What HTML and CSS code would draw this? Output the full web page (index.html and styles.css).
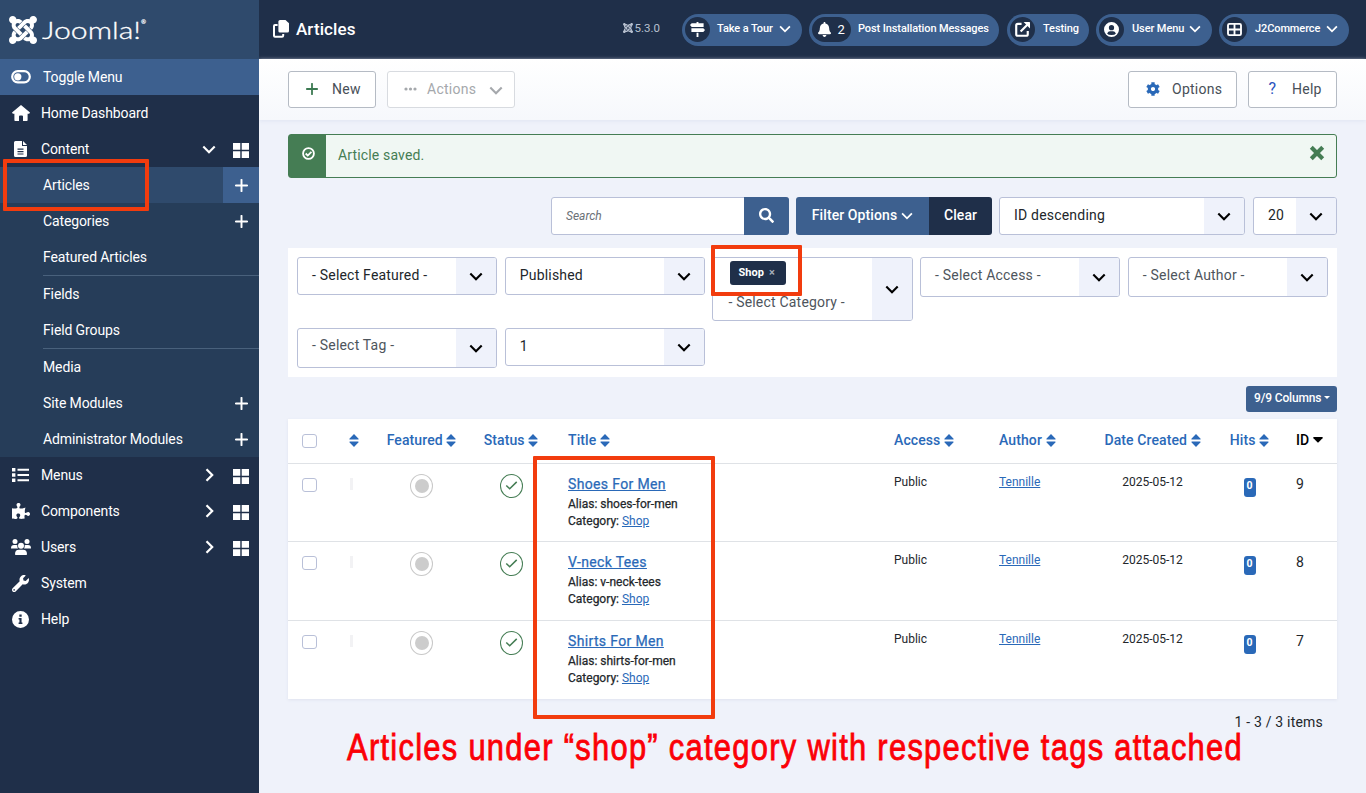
FILE: index.html
```html
<!DOCTYPE html>
<html lang="en">
<head>
    <meta charset="UTF-8">
    <meta name="viewport" content="width=device-width, initial-scale=1.0">
    <title>Articles - Joomla! Administration</title>
    <link rel="stylesheet" href="styles.css">
</head>
<body>
    <!-- Icon sprite -->
    <svg class="sprite">
        <symbol id="joomla" viewBox="0 32 448 448"><path d="M.6 92.1C.6 58.8 27.4 32 60.4 32c30 0 54.5 21.9 59.2 50.2 32.6-7.6 67.1.6 96.5 30l-44.3 44.3c-20.5-20.5-42.6-16.3-55.4-3.5-14.3 14.3-14.3 37.9 0 52.2l99.5 99.5-44 44.3c-87.7-87.2-49.7-49.7-99.8-99.7-26.8-26.5-35-64.8-24.8-98.9C20.4 144.6.6 120.7.6 92.1zm129.5 116.4l44.3 44.3c10-10 89.7-89.7 99.7-99.8 14.3-14.3 37.6-14.3 51.9 0 12.8 12.8 17 35-3.5 55.4l44 44.3c31.2-31.2 38.5-67.6 28.9-101.2 29.2-4.1 51.9-29.2 51.9-59.5 0-33.2-26.8-60.1-59.8-60.1-30.3 0-55.4 22.5-59.5 51.6-33.8-9.9-71.7-1.5-98.3 25.1-18.3 19.1-71.1 71.5-99.6 99.9zm266.3 152.2c8.2-32.7-.9-68.5-26.3-93.9-11.8-12.2 5 4.7-99.5-99.7l-44.3 44.3 99.7 99.7c14.3 14.3 14.3 37.6 0 51.9-12.8 12.8-35 17-55.4-3.5l-44 44.3c27.6 30.2 68 38.8 102.7 28 5.5 27.4 29.7 48.1 58.9 48.1 33 0 59.8-26.8 59.8-60.1 0-30.2-22.5-55-51.6-59.1zm-84.3-53.1l-44-44.3c-87 86.4-50.4 50.4-99.7 99.8-14.3 14.3-37.6 14.3-51.9 0-13.1-13.4-16.9-35.3 3.2-55.4l-44-44.3c-30.2 30.2-38 65.2-29.5 98.3-26.7 6-46.2 29.9-46.2 58.2C0 453.2 26.8 480 59.8 480c28.6 0 52.5-19.8 58.6-46.7 32.7 8.2 68.5-.6 94.2-26 32.1-32 12.2-12.4 99.5-99.7z"/></symbol>
        <symbol id="toggle" viewBox="0 0 20 14"><rect x="1.2" y="1.2" width="17.6" height="11.2" rx="5.6" fill="none" stroke="currentColor" stroke-width="2.2"/><circle cx="6.8" cy="6.8" r="3.6"/></symbol>
        <symbol id="home" viewBox="0 0 18 16"><path d="M9 0 18 7.6 17.2 8.8H15.6V15.2Q15.600 16 14.800 16H11V11.500Q11 10.500 10 10.500H8Q7 10.500 7 11.500V16H3.200Q2.400 16 2.400 15.200V8.800H.8L0 7.600Z"/></symbol>
        <symbol id="file" viewBox="0 0 13 16"><path fill-rule="evenodd" d="M1.500 0H8V5H13V14.500Q13 16 11.500 16H1.500Q0 16 0 14.500V1.500Q0 0 1.500 0ZM9 0 13 4H9ZM3.500 7.500V8.700H9.500V7.500ZM3.500 10V11.200H9.500V10ZM3.500 12.500V13.600H9.500V12.500Z"/></symbol>
        <symbol id="list" viewBox="0 0 17 14"><path d="M0 0H3.400V3.400H0ZM0 5.300H3.400V8.700H0ZM0 10.600H3.400V14H0ZM5.500.8H17V2.800H5.500ZM5.500 6H17V8H5.500ZM5.500 11.200H17V13.200H5.500Z"/></symbol>
        <symbol id="puzzle" viewBox="0 0 576 512"><path d="M519.442 288.651c-41.519 0-59.5 31.593-82.058 31.593C377.409 320.244 432 144 432 144s-196.288 80-196.288-3.297c0-35.827 36.288-46.25 36.288-85.985C272 19.216 243.885 0 210.539 0c-34.654 0-66.366 18.891-66.366 56.346 0 41.364 31.711 59.277 31.711 81.75C175.885 207.719 0 166.758 0 166.758v333.237s178.635 41.047 178.635-28.662c0-22.473-40-40.107-40-81.471 0-37.456 29.25-56.346 63.577-56.346 33.673 0 61.788 19.216 61.788 54.717 0 39.735-36.288 50.158-36.288 85.985 0 60.803 129.675 25.73 181.23 25.73 0 0-34.725-120.101 25.827-120.101 35.962 0 46.423 36.152 86.308 36.152C556.712 416 576 387.99 576 354.443c0-34.199-18.962-65.792-56.558-65.792z"/></symbol>
        <symbol id="users" viewBox="0 0 20 16"><circle cx="4" cy="2.600" r="2.500"/><circle cx="16" cy="2.600" r="2.500"/><circle cx="10" cy="6.800" r="3"/><path d="M0 9.200Q0 6 3 6H5.300Q6 6 6.400 6.300 6 8.300 7 9.600H.5Q0 9.600 0 9.200ZM20 9.200Q20 6 17 6H14.700Q14 6 13.600 6.300 14 8.300 13 9.600H19.500Q20 9.600 20 9.200ZM4 15.200Q4 10.800 8 10.800H12Q16 10.800 16 15.200 16 16 15.200 16H4.800Q4 16 4 15.200Z"/></symbol>
        <symbol id="wrench" viewBox="0 0 512 512"><path d="M507.73 109.1c-2.24-9.03-13.54-12.09-20.12-5.51l-74.36 74.36-67.88-11.31-11.31-67.88 74.36-74.36c6.62-6.62 3.43-17.9-5.66-20.16-47.38-11.74-99.55.91-136.58 37.93-39.64 39.64-50.55 97.1-34.05 147.2L18.74 402.76c-24.99 24.99-24.99 65.51 0 90.5 24.99 24.99 65.51 24.99 90.5 0l213.21-213.21c50.12 16.71 107.47 5.68 147.37-34.22 37.07-37.07 49.7-89.32 37.91-136.73zM64 472c-13.25 0-24-10.75-24-24 0-13.26 10.75-24 24-24s24 10.74 24 24c0 13.25-10.75 24-24 24z"/></symbol>
        <symbol id="info" viewBox="0 0 16 16"><path fill-rule="evenodd" d="M8 0A8 8 0 1 1 8 16 8 8 0 1 1 8 0ZM6.900 3.400V5.500H9.100V3.400ZM6.200 6.600V7.900H7V10.800H6.200V12.200H9.800V10.800H9V6.600Z"/></symbol>
        <symbol id="grid" viewBox="0 0 16 15"><path d="M0 0H7.300V6.800H0ZM8.700 0H16V6.800H8.700ZM0 8.200H7.300V15H0ZM8.700 8.200H16V15H8.700Z"/></symbol>
        <symbol id="plus" viewBox="0 0 12 12"><path d="M6 .8V11.200M.8 6H11.200" fill="none" stroke="currentColor" stroke-width="1.800" stroke-linecap="round"/></symbol>
        <symbol id="down" viewBox="0 0 14 9"><path d="M1.300 1.500 7 7.200 12.700 1.500" fill="none" stroke="currentColor" stroke-width="2.100"/></symbol>
        <symbol id="right" viewBox="0 0 9 14"><path d="M1.500 1.300 7.200 7 1.500 12.700" fill="none" stroke="currentColor" stroke-width="2.200"/></symbol>
        <symbol id="copy" viewBox="0 0 16 18"><path d="M7 0H12.500L16 3.200V11Q16 12.600 14.400 12.600H7Q5.400 12.600 5.400 11V1.600Q5.400 0 7 0Z"/><path d="M4.600 5H2Q1 5 1 6V15.800Q1 16.800 2 16.800H9Q10.200 16.800 10.200 15.500V14" fill="none" stroke="currentColor" stroke-width="2"/></symbol>
        <symbol id="signs" viewBox="0 0 16 16"><path d="M7 0H9V1.200H14.500V5.200H1.800L0 3.200 1.800 1.200H7ZM1.500 6.600H14.200L16 8.600 14.200 10.600H1.500ZM7 11.400H9V16H7Z"/></symbol>
        <symbol id="bell" viewBox="0 0 448 512"><path d="M224 512c35.32 0 63.97-28.65 63.97-64H160.03c0 35.35 28.65 64 63.97 64zm215.39-149.71c-19.32-20.76-55.47-51.99-55.47-154.29 0-77.7-54.48-139.9-127.94-155.16V32c0-17.67-14.32-32-31.98-32s-31.98 14.33-31.98 32v20.84C118.56 68.1 64.08 130.3 64.08 208c0 102.3-36.15 133.53-55.47 154.29-6 6.45-8.66 14.16-8.61 21.71.11 16.4 12.98 32 32.1 32h383.8c19.12 0 32-15.6 32.1-32 .05-7.55-2.61-15.27-8.61-21.71z"/></symbol>
        <symbol id="external" viewBox="0 0 16 16"><path d="M7 2H3Q1.300 2 1.300 3.700V13Q1.300 14.700 3 14.700H12Q13.600 14.700 13.600 13V9.500M6 10.200 14 2.200" fill="none" stroke="currentColor" stroke-width="2.300"/><path d="M9.200 0H15.400Q16 0 16 .6V6.800Z"/></symbol>
        <symbol id="user" viewBox="0 0 16 16"><path fill-rule="evenodd" d="M8 0A8 8 0 1 1 8 16 8 8 0 1 1 8 0ZM8 3.200A2.800 2.800 0 1 0 8 8.800 2.800 2.800 0 1 0 8 3.200ZM3.300 12.200Q4.300 13.900 8 13.900 11.700 13.900 12.700 12.200 11.600 9.900 9.600 9.900H6.400Q4.400 9.900 3.300 12.200Z"/></symbol>
        <symbol id="table" viewBox="0 0 16 14"><path d="M2.500 1H13.500Q15 1 15 2.500V11.500Q15 13 13.500 13H2.500Q1 13 1 11.500V2.500Q1 1 2.500 1ZM8 1V13M1 7H15" fill="none" stroke="currentColor" stroke-width="2"/></symbol>
        <symbol id="dots" viewBox="0 0 13 4"><circle cx="2" cy="2" r="1.600"/><circle cx="6.500" cy="2" r="1.600"/><circle cx="11" cy="2" r="1.600"/></symbol>
        <symbol id="cog" viewBox="-8 -8 16 16"><circle r="4.200" fill="none" stroke="currentColor" stroke-width="3.600"/><path d="M0-7.700V-5M0 7.700V5M6.700-3.800 4.400-2.500M-6.700 3.800-4.400 2.500M6.700 3.800 4.400 2.500M-6.700-3.800-4.400-2.500" stroke="currentColor" stroke-width="3.800"/></symbol>
        <symbol id="check-circle" viewBox="0 0 12 12"><circle cx="6" cy="6" r="5" fill="none" stroke="currentColor" stroke-width="1.700"/><path d="M3.400 6 5.300 7.900 8.700 4.400" fill="none" stroke="currentColor" stroke-width="1.700"/></symbol>
        <symbol id="check" viewBox="0 0 14 10"><path d="M1.200 5 5 8.600 12.800 1" fill="none" stroke="currentColor" stroke-width="1.700"/></symbol>
        <symbol id="times" viewBox="0 0 14 14"><path d="M2 2 12 12M12 2 2 12" fill="none" stroke="currentColor" stroke-width="3.600"/></symbol>
        <symbol id="search" viewBox="0 0 512 512"><path d="M505 442.7L405.3 343c-4.5-4.5-10.6-7-17-7H372c27.6-35.3 44-79.7 44-128C416 93.1 322.9 0 208 0S0 93.1 0 208s93.1 208 208 208c48.3 0 92.7-16.4 128-44v16.3c0 6.4 2.5 12.5 7 17l99.7 99.7c9.4 9.4 24.6 9.4 33.9 0l28.3-28.3c9.4-9.400 9.400-24.600.1-34zM208 336c-70.7 0-128-57.2-128-128 0-70.7 57.2-128 128-128 70.7 0 128 57.2 128 128 0 70.700-57.200 128-128 128z"/></symbol>
        <symbol id="sort" viewBox="0 0 10 13"><path d="M5 0 9.600 4.700Q9.800 5.600 9 5.600H1Q.2 5.600.4 4.700ZM5 13 9.600 8.300Q9.800 7.400 9 7.400H1Q.2 7.400.4 8.300Z"/></symbol>
        <symbol id="caret" viewBox="0 0 10 6"><path d="M.8 0H9.200Q10.200.4 9.500 1.200L5.600 5.200Q5 5.700 4.400 5.200L.5 1.200Q-.2.4.8 0Z"/></symbol>
    </svg>

    <div class="wrapper">
        <!-- Sidebar -->
        <aside class="sidebar">
            <div class="logo">
                <svg class="logo-mark"><use href="#joomla"/></svg>
                <svg class="logo-text" width="108" height="32"><text x="0" y="25" textLength="99" lengthAdjust="spacingAndGlyphs">Joomla!</text><text class="reg" x="99" y="10">®</text></svg>
            </div>
            <a class="item toggle" href="#"><svg class="ico" width="20" height="14"><use href="#toggle"/></svg><span>Toggle Menu</span></a>
            <a class="item" href="#"><svg class="ico" width="18" height="16"><use href="#home"/></svg><span>Home Dashboard</span></a>
            <a class="item" href="#"><svg class="ico" width="13" height="16"><use href="#file"/></svg><span>Content</span><svg class="arrow" width="14" height="9"><use href="#down"/></svg><svg class="dash"><use href="#grid"/></svg></a>
            <div class="submenu">
                <a class="sub active" href="#">Articles<i class="add"><svg><use href="#plus"/></svg></i></a>
                <a class="sub" href="#">Categories<i class="add"><svg><use href="#plus"/></svg></i></a>
                <a class="sub" href="#">Featured Articles</a>
                <hr>
                <a class="sub" href="#">Fields</a>
                <a class="sub" href="#">Field Groups</a>
                <hr>
                <a class="sub" href="#">Media</a>
                <a class="sub" href="#">Site Modules<i class="add"><svg><use href="#plus"/></svg></i></a>
                <a class="sub" href="#">Administrator Modules<i class="add"><svg><use href="#plus"/></svg></i></a>
            </div>
            <a class="item" href="#"><svg class="ico" width="17" height="14"><use href="#list"/></svg><span>Menus</span><svg class="arrow" width="9" height="14"><use href="#right"/></svg><svg class="dash"><use href="#grid"/></svg></a>
            <a class="item" href="#"><svg class="ico" width="18" height="16"><use href="#puzzle"/></svg><span>Components</span><svg class="arrow" width="9" height="14"><use href="#right"/></svg><svg class="dash"><use href="#grid"/></svg></a>
            <a class="item" href="#"><svg class="ico" width="20" height="16"><use href="#users"/></svg><span>Users</span><svg class="arrow" width="9" height="14"><use href="#right"/></svg><svg class="dash"><use href="#grid"/></svg></a>
            <a class="item" href="#"><svg class="ico" width="17" height="17"><use href="#wrench"/></svg><span>System</span></a>
            <a class="item" href="#"><svg class="ico" width="17" height="17"><use href="#info"/></svg><span>Help</span></a>
        </aside>

        <main class="main">
            <!-- Header -->
            <header class="header">
                <svg class="title-icon"><use href="#copy"/></svg>
                <h1>Articles</h1>
                <div class="version"><svg><use href="#joomla"/></svg>5.3.0</div>
                <div class="pill w-tour"><b><svg width="15" height="15"><use href="#signs"/></svg></b><span>Take a Tour</span><svg class="chev"><use href="#down"/></svg></div>
                <div class="pill w-post"><b class="wide"><svg width="13" height="15"><use href="#bell"/></svg>2</b><span>Post Installation Messages</span></div>
                <div class="pill w-site"><b><svg width="15" height="15"><use href="#external"/></svg></b><span>Testing</span></div>
                <div class="pill w-user"><b><svg width="15" height="15"><use href="#user"/></svg></b><span>User Menu</span><svg class="chev"><use href="#down"/></svg></div>
                <div class="pill w-j2"><b><svg width="15" height="13"><use href="#table"/></svg></b><span>J2Commerce</span><svg class="chev"><use href="#down"/></svg></div>
            </header>

            <!-- Toolbar -->
            <div class="toolbar">
                <button class="btn new"><svg class="green" width="12" height="12"><use href="#plus"/></svg>New</button>
                <button class="btn actions"><svg width="13" height="4"><use href="#dots"/></svg>Actions<svg class="last" width="14" height="9"><use href="#down"/></svg></button>
                <button class="btn options"><svg class="blue" width="14" height="14"><use href="#cog"/></svg>Options</button>
                <button class="btn help"><em>?</em>Help</button>
            </div>

            <section class="content">
                <div class="alert">
                    <div class="alert-icon"><svg width="13" height="13"><use href="#check-circle"/></svg></div>
                    <p>Article saved.</p>
                    <svg class="close" width="16" height="16"><use href="#times"/></svg>
                </div>

                <div class="searchbar">
                    <div class="search"><span>Search</span><b><svg width="15" height="15"><use href="#search"/></svg></b></div>
                    <div class="filter-btns"><button class="filter">Filter Options<svg width="12" height="8"><use href="#down"/></svg></button><button class="clear">Clear</button></div>
                    <div class="select order"><span>ID descending</span><i><svg><use href="#down"/></svg></i></div>
                    <div class="select limit"><span>20</span><i><svg><use href="#down"/></svg></i></div>
                </div>

                <div class="filters">
                    <div class="select"><span>- Select Featured -</span><i><svg><use href="#down"/></svg></i></div>
                    <div class="select"><span>Published</span><i><svg><use href="#down"/></svg></i></div>
                    <div class="select category">
                        <div class="choices"><b class="tag">Shop <small>×</small></b><span>- Select Category -</span></div>
                        <i><svg><use href="#down"/></svg></i>
                    </div>
                    <div class="select multi"><span>- Select Access -</span><i><svg><use href="#down"/></svg></i></div>
                    <div class="select multi"><span>- Select Author -</span><i><svg><use href="#down"/></svg></i></div>
                    <div class="select multi tags"><span>- Select Tag -</span><i><svg><use href="#down"/></svg></i></div>
                    <div class="select"><span>1</span><i><svg><use href="#down"/></svg></i></div>
                </div>

                <div class="columns"><button>9/9 Columns<span></span></button></div>

                <table class="articles">
                    <colgroup><col class="c-check"><col class="c-order"><col class="c-feat"><col class="c-status"><col class="c-title"><col class="c-access"><col class="c-author"><col class="c-date"><col class="c-hits"><col class="c-id"></colgroup>
                    <thead>
                        <tr>
                            <th><i class="box"></i></th>
                            <th class="center"><svg><use href="#sort"/></svg></th>
                            <th class="center">Featured <svg><use href="#sort"/></svg></th>
                            <th class="center">Status <svg><use href="#sort"/></svg></th>
                            <th>Title <svg><use href="#sort"/></svg></th>
                            <th>Access <svg><use href="#sort"/></svg></th>
                            <th>Author <svg><use href="#sort"/></svg></th>
                            <th class="center">Date Created <svg><use href="#sort"/></svg></th>
                            <th class="center">Hits <svg><use href="#sort"/></svg></th>
                            <th class="current">ID <svg class="caret"><use href="#caret"/></svg></th>
                        </tr>
                    </thead>
                    <tbody>
                        <tr>
                            <td><i class="box"></i></td>
                            <td class="center"><i class="grip"></i></td>
                            <td class="center"><i class="round feat"></i></td>
                            <td class="center"><i class="round pub"><svg><use href="#check"/></svg></i></td>
                            <td class="info"><a class="name" href="#">Shoes For Men</a><div>Alias: shoes-for-men</div><div>Category: <a href="#">Shop</a></div></td>
                            <td class="small">Public</td>
                            <td class="small"><a href="#">Tennille</a></td>
                            <td class="small center">2025-05-12</td>
                            <td class="center"><b class="badge">0</b></td>
                            <td class="id">9</td>
                        </tr>
                        <tr>
                            <td><i class="box"></i></td>
                            <td class="center"><i class="grip"></i></td>
                            <td class="center"><i class="round feat"></i></td>
                            <td class="center"><i class="round pub"><svg><use href="#check"/></svg></i></td>
                            <td class="info"><a class="name" href="#">V-neck Tees</a><div>Alias: v-neck-tees</div><div>Category: <a href="#">Shop</a></div></td>
                            <td class="small">Public</td>
                            <td class="small"><a href="#">Tennille</a></td>
                            <td class="small center">2025-05-12</td>
                            <td class="center"><b class="badge">0</b></td>
                            <td class="id">8</td>
                        </tr>
                        <tr>
                            <td><i class="box"></i></td>
                            <td class="center"><i class="grip"></i></td>
                            <td class="center"><i class="round feat"></i></td>
                            <td class="center"><i class="round pub"><svg><use href="#check"/></svg></i></td>
                            <td class="info"><a class="name" href="#">Shirts For Men</a><div>Alias: shirts-for-men</div><div>Category: <a href="#">Shop</a></div></td>
                            <td class="small">Public</td>
                            <td class="small"><a href="#">Tennille</a></td>
                            <td class="small center">2025-05-12</td>
                            <td class="center"><b class="badge">0</b></td>
                            <td class="id">7</td>
                        </tr>
                    </tbody>
                </table>
                <div class="counter">1 - 3 / 3 items</div>
            </section>
        </main>
    </div>

    <!-- Annotations -->
    <div class="mark mark-menu"></div>
    <div class="mark mark-filter"></div>
    <div class="mark mark-titles"></div>
    <svg class="caption" width="910" height="44"><text x="1" y="31" textLength="896" lengthAdjust="spacingAndGlyphs">Articles under “shop” category with respective tags attached</text></svg>
</body>
</html>
```
FILE: styles.css
```css
* {
    box-sizing: border-box;
}

body {
    margin: 0;
    height: 793px;
    overflow: hidden;
    position: relative;
    font-family: Roboto, "Liberation Sans", sans-serif;
    font-size: 14px;
    color: #22262a;
    background: #eff2fa;
}

a {
    color: #2a69b8;
}

i, em {
    font-style: normal;
}

svg {
    fill: currentColor;
    flex: none;
}

button {
    font: inherit;
}

.sprite {
    display: none;
}

.wrapper {
    display: flex;
    height: 100%;
}

/* Sidebar */
.sidebar {
    position: relative;
    z-index: 1;
    width: 259px;
    flex: none;
    background: #1f2f49;
    color: #fff;
    letter-spacing: -.12px;
}

.logo {
    height: 59px;
    display: flex;
    align-items: center;
    padding-left: 9px;
    background: #2f4a6c;
}

.logo-mark {
    width: 28px;
    height: 28px;
}

.logo-text {
    margin-left: 5px;
    font-family: Lato, sans-serif;
    font-weight: 300;
    font-size: 24px;
    letter-spacing: 0;
    stroke: currentColor;
    stroke-width: .3px;
}

.logo-text .reg {
    font-size: 6px;
}

.item {
    display: grid;
    grid-template-columns: 41px 1fr 20px 40px;
    align-items: center;
    height: 36px;
    color: #fff;
    text-decoration: none;
}

.item .ico {
    justify-self: center;
}

.item .arrow {
    justify-self: center;
}

.item .dash {
    width: 16px;
    height: 15px;
    margin: 3px 0 0 14px;
}

.toggle {
    background: #3d608f;
}

.toggle span {
    padding-left: 2px;
}

.submenu {
    background: #263d59;
}

.submenu hr {
    height: 1px;
    margin: 0 0 0 43px;
    border: 0;
    background: #49617c;
}

.sub {
    display: flex;
    align-items: center;
    justify-content: space-between;
    height: 36px;
    padding-left: 43px;
    color: #fff;
    text-decoration: none;
}

.sub.active {
    background: #2f4a6c;
}

.add {
    display: flex;
    align-items: center;
    justify-content: center;
    width: 36px;
    height: 36px;
    padding-left: 1px;
}

.add svg {
    width: 13px;
    height: 13px;
}

.active .add {
    background: #3d608f;
}

/* Header */
.main {
    flex: 1;
    min-width: 0;
}

.header {
    display: flex;
    align-items: center;
    height: 59px;
    padding: 0 17px 0 14px;
    background: #1f2f49;
    color: #fff;
}

.title-icon {
    width: 16px;
    height: 18px;
    margin-top: -2px;
}

.header h1 {
    flex: 1;
    margin: -2px 0 0 7px;
    font-size: 17px;
    font-weight: 500;
    letter-spacing: .1px;
}

.version {
    display: flex;
    align-items: center;
    gap: 2px;
    margin: -3px 22px 0 0;
    font-size: 11.5px;
    color: #b7c0cf;
}

.version svg {
    width: 10px;
    height: 10px;
}

.pill {
    display: flex;
    align-items: center;
    height: 32px;
    padding-left: 3px;
    border-radius: 16px;
    background: #3d608f;
    font-size: 11px;
    font-weight: 500;
    letter-spacing: -.1px;
}

.pill + .pill {
    margin-left: 7px;
}

.pill b {
    display: flex;
    align-items: center;
    justify-content: center;
    width: 25px;
    height: 25px;
    margin: -1px 8px 0 0;
    border-radius: 13px;
    background: #1f2f49;
}

.pill b.wide {
    width: 39px;
    gap: 6px;
    margin-right: 7px;
    font-size: 13px;
    font-weight: 400;
}

.pill span {
    margin-top: -3px;
    white-space: nowrap;
}

.chev {
    width: 12px;
    height: 8px;
    margin: -1px 11px 0 auto;
}

.w-tour { width: 120px; }
.w-tour b { margin-right: 7px; }
.w-site { width: 82px; }
.w-user { width: 116px; }
.w-j2 { width: 130px; }

.pill.w-post {
    width: 190px;
    margin-right: 1px;
}

/* Toolbar */
.toolbar {
    display: flex;
    gap: 11px;
    height: 61px;
    padding: 12px 29px 0;
    background: linear-gradient(#fff, #f6f8fc);
    box-shadow: 0 1px 4px #dfe4f2;
}

.btn {
    display: flex;
    align-items: center;
    height: 37px;
    padding: 0 0 2px 17px;
    border: 1px solid #b5bbc4;
    border-radius: 3px;
    background: #fff;
    color: #484f57;
    letter-spacing: .25px;
}

.btn svg {
    margin-right: 14px;
}

.new { width: 88px; }

.actions {
    width: 128px;
    padding-left: 16px;
    border-color: #d8dbe0;
    color: #a5a8ac;
}

.actions svg {
    margin-right: 10px;
}

.actions svg.last {
    margin: 3px 0 0 13px;
}

.options {
    width: 109px;
    margin-left: auto;
}

.options svg {
    margin-right: 12px;
}

.help { width: 89px; }

.help em {
    width: 9px;
    margin: 0 15px 0 2px;
    font-size: 16px;
    color: #2a52be;
}

.green { color: #3c7a52; }
.blue { color: #2a69b8; }

/* Content */
.content {
    padding: 14px 29px 0;
}

.alert {
    display: flex;
    height: 44px;
    border: 1px solid #457d54;
    border-radius: 3px;
    background: #f0f7f3;
    color: #457d54;
}

.alert-icon {
    width: 37px;
    padding: 12px 0 0 13px;
    background: #457d54;
    color: #fff;
}

.alert p {
    flex: 1;
    margin: 12px 12px 0;
    letter-spacing: .15px;
}

.close {
    margin: 10px 11px 0 0;
}

.searchbar {
    display: flex;
    justify-content: flex-end;
    height: 38px;
    margin-top: 19px;
}

.search {
    display: flex;
    width: 238px;
    margin-right: 7px;
    border: 1px solid #b9c0d8;
    border-radius: 3px;
    background: #fff;
}

.search span {
    flex: 1;
    padding: 11px 14px;
    font-size: 12px;
    font-style: italic;
    color: #6b7177;
}

.search b {
    display: flex;
    align-items: center;
    justify-content: center;
    width: 45px;
    margin: -1px;
    padding-bottom: 2px;
    border-radius: 0 3px 3px 0;
    background: #3d608f;
    color: #fff;
}

.filter-btns {
    display: flex;
    margin-right: 7px;
    border-radius: 3px;
    overflow: hidden;
}

.filter-btns button {
    border: 0;
    padding: 0 0 2px;
    color: #fff;
    background: #3d608f;
    font-weight: 500;
    letter-spacing: .1px;
}

.filter-btns .filter { width: 133px; }

.filter-btns svg {
    margin-left: 4px;
}

.filter-btns .clear {
    width: 63px;
    background: #1f2f49;
}

.select {
    display: flex;
    height: 38px;
    border: 1px solid #b9c0d8;
    border-radius: 3px;
    background: #fff;
    overflow: hidden;
    letter-spacing: .2px;
}

.select > span {
    flex: 1;
    padding: 9px 0 0 14px;
}

.select i {
    display: flex;
    align-items: center;
    justify-content: center;
    width: 40px;
    padding-top: 1px;
    background: #eff2fb;
    color: #000;
}

.select i svg {
    width: 14px;
    height: 9px;
}

.order {
    width: 246px;
    margin-right: 8px;
}

.limit { width: 84px; }

.filters {
    display: grid;
    grid-template-columns: repeat(5, 1fr);
    grid-template-rows: 64px 40px;
    gap: 7px 7.5px;
    align-items: start;
    height: 129px;
    margin-top: 13px;
    padding: 9px;
    background: #fff;
}

.filters .multi {
    height: 40px;
    color: #4e555c;
}

.filters .tags > span {
    padding-top: 8px;
}

.filters .category {
    height: 64px;
    color: #4e555c;
}

.choices {
    flex: 1;
}

.choices .tag {
    display: block;
    width: 56px;
    height: 24px;
    margin: 3px 0 9px 17px;
    padding: 5px 8px;
    border-radius: 3px;
    background: #1f2f49;
    color: #fff;
    font-size: 11px;
    line-height: 14px;
    letter-spacing: .1px;
    white-space: nowrap;
}

.tag small {
    margin-left: 2px;
    font-size: 11px;
    color: #a5adba;
}

.choices span {
    padding-left: 15px;
}

.columns {
    display: flex;
    justify-content: flex-end;
    padding: 9px 0 7px;
}

.columns button {
    display: flex;
    width: 91px;
    height: 26px;
    padding: 5px 8px;
    border: 0;
    border-radius: 3px;
    background: #3d608f;
    color: #fff;
    font-size: 12px;
    font-weight: 500;
    letter-spacing: -.15px;
    white-space: nowrap;
}

.columns span {
    margin: 5px 0 0 3px;
    border: 3px solid transparent;
    border-top-color: #fff;
}

/* Articles table */
.articles {
    width: 100%;
    table-layout: fixed;
    border-collapse: separate;
    border-spacing: 0;
    background: #fff;
    box-shadow: 0 1px 3px #dfe3ef;
}

.c-check { width: 43px; }
.c-order { width: 45px; }
.c-feat { width: 91px; }
.c-status { width: 88px; }
.c-title { width: 326px; }
.c-access { width: 105px; }
.c-author { width: 103px; }
.c-date { width: 127px; }
.c-hits { width: 67px; }

.articles th {
    height: 44px;
    padding: 0 0 2px 13px;
    color: #2a69b8;
    font-weight: 500;
    letter-spacing: .1px;
    text-align: left;
    white-space: nowrap;
}

.articles th svg {
    width: 10px;
    height: 13px;
    margin-left: 0;
    vertical-align: -2px;
}

.articles th .caret {
    height: 6px;
    vertical-align: 2px;
}

.articles th.current {
    color: #000;
}

.articles td {
    height: 79px;
    padding: 12px 0 0 13px;
    border-top: 1px solid #dfe2e6;
    vertical-align: top;
}

.articles tbody tr:first-child td {
    height: 78px;
}

.articles .center {
    padding-left: 0;
    text-align: center;
}

.box {
    display: block;
    width: 15px;
    height: 14px;
    margin: 2px 0 0 1px;
    border: 1px solid #b9c0d8;
    border-radius: 3px;
    background: #fff;
}

.grip {
    display: inline-block;
    width: 3px;
    height: 12px;
    margin: 2px 4px 0 0;
    background: #f2f2f4;
}

.round {
    display: inline-flex;
    align-items: center;
    justify-content: center;
    width: 23px;
    height: 24px;
    margin-top: -2px;
    border: 1px solid #c8c8c8;
    border-radius: 50%;
}

.feat::after {
    content: "";
    width: 14px;
    height: 14px;
    margin-top: -1px;
    border-radius: 50%;
    background: #ccc;
}

.pub {
    border-color: #457d54;
    color: #457d54;
}

.pub svg {
    width: 13px;
    height: 9px;
    margin-top: -2px;
}

.articles .info {
    padding-left: 13px;
    font-size: 12px;
    line-height: 17.5px;
    -webkit-text-stroke: .25px;
}

.info .name {
    display: block;
    margin-bottom: 2px;
    font-size: 14px;
    letter-spacing: .35px;
}

.info div a {
    -webkit-text-stroke: 0;
}

.articles .small {
    padding-top: 11px;
    font-size: 12px;
}

.badge {
    display: inline-block;
    width: 12px;
    height: 19px;
    margin-top: 1px;
    border-radius: 3px;
    background: #2a69b8;
    color: #fff;
    font-size: 10.5px;
    line-height: 16px;
}

.counter {
    margin: 15px 14px 0 0;
    text-align: right;
    letter-spacing: .2px;
}

/* Red annotations */
.mark {
    position: absolute;
    z-index: 2;
    border: 4px solid #f23c0e;
    border-radius: 1px;
}

.mark-menu {
    left: 3px;
    top: 159px;
    width: 146px;
    height: 52px;
}

.mark-filter {
    left: 711px;
    top: 245px;
    width: 91px;
    height: 51px;
}

.mark-titles {
    left: 533px;
    top: 456px;
    width: 182px;
    height: 263px;
}

.caption {
    position: absolute;
    left: 346px;
    top: 729px;
    fill: #fb0007;
    stroke: #fb0007;
    stroke-width: .8px;
    font-family: "Liberation Sans", Arial, sans-serif;
    font-size: 36px;
    letter-spacing: 1.5px;
}
```
